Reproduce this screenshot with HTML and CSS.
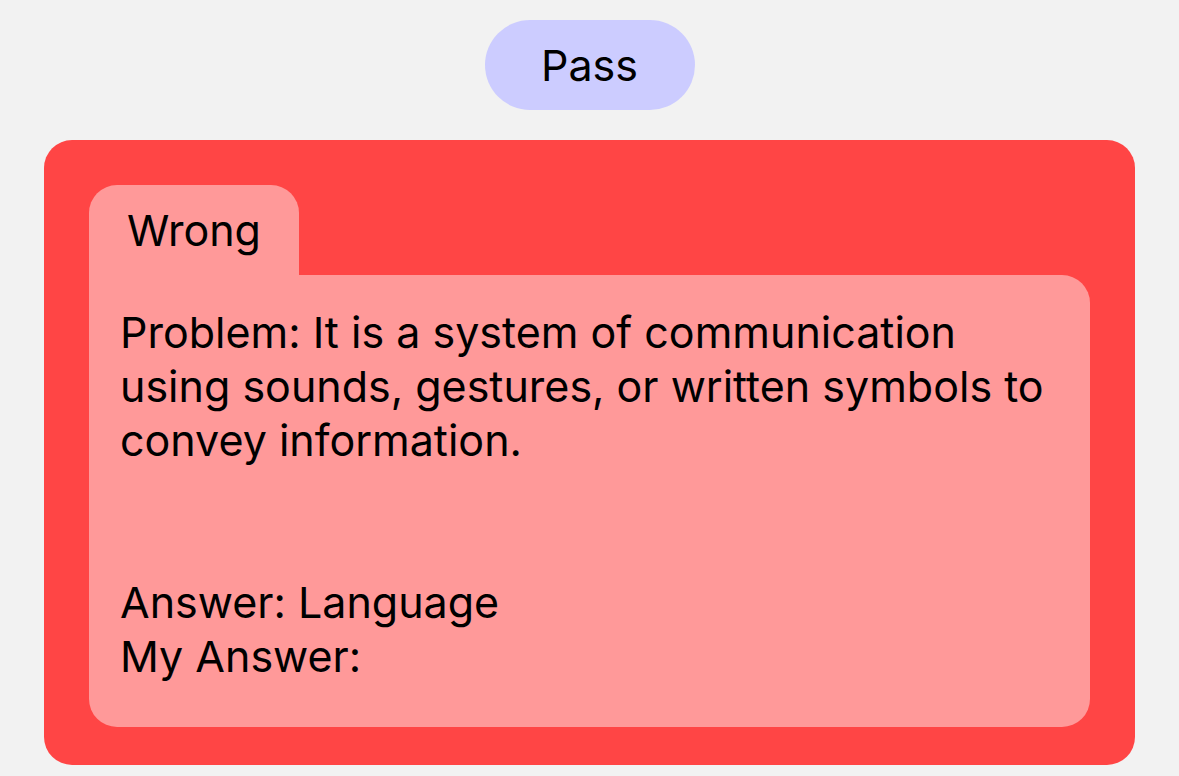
FILE: index.html
```html
<!DOCTYPE html>
<html>
<head>
<meta charset="utf-8">
<link rel="stylesheet" href="styles.css">
</head>
<body>
<div class="page">
  <div class="pass">Pass</div>
  <div class="card">
    <div class="tab">Wrong</div>
    <div class="panel">
      <div class="line">Problem: It is a system of communication<br>using sounds, gestures, or written symbols to<br>convey information.</div>
      <div class="line blank">&nbsp;</div>
      <div class="line blank">&nbsp;</div>
      <div class="line">Answer: Language</div>
      <div class="line">My Answer:</div>
    </div>
  </div>
</div>
</body>
</html>
```

FILE: styles.css
```css
html, body {
  margin: 0;
  padding: 0;
  background: #f2f2f2;
  font-family: Inter, "Noto Sans", sans-serif;
  color: #000;
}
.page {
  display: flex;
  flex-direction: column;
  align-items: center;
  padding: 20px 44px 0;
}
.pass {
  width: 210px;
  height: 90px;
  border-radius: 45px;
  background: #ccccff;
  display: flex;
  align-items: center;
  justify-content: center;
  font-size: 43px;
}
.card {
  align-self: stretch;
  margin-top: 30px;
  background: #ff4545;
  border-radius: 28px;
  padding: 45px 45px 38px;
  display: flex;
  flex-direction: column;
}
.tab {
  width: 210px;
  height: 90px;
  background: #ff9999;
  border-radius: 28px 28px 0 0;
  display: flex;
  align-items: center;
  justify-content: center;
  font-size: 43px;
}
.panel {
  background: #ff9999;
  border-radius: 0 28px 28px 28px;
  padding: 30px 31px 44px;
  font-size: 43px;
  line-height: 54px;
  white-space: nowrap;
}
```
